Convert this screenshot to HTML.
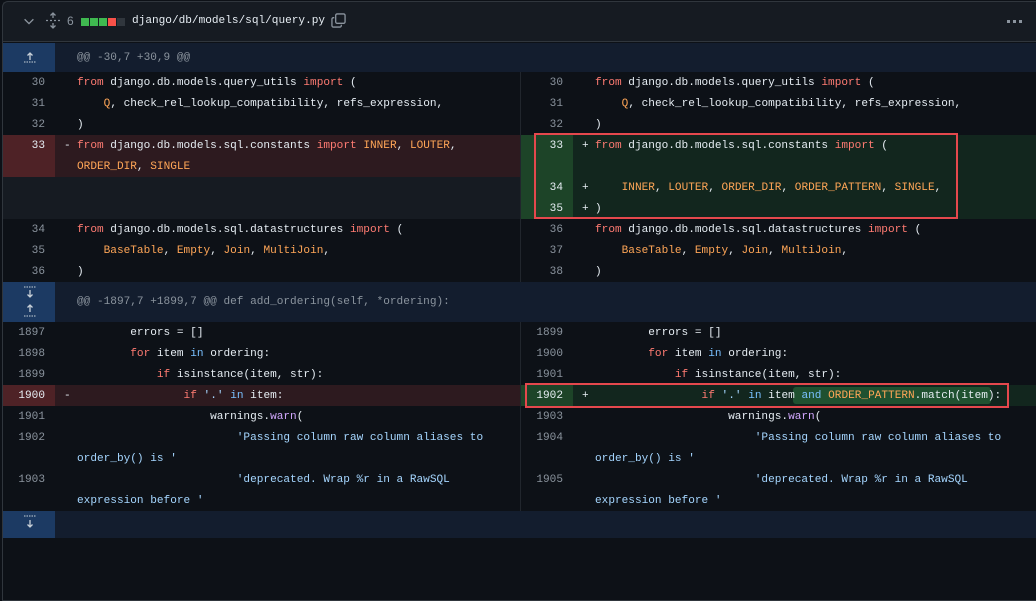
<!DOCTYPE html>
<html><head><meta charset="utf-8"><style>
*{margin:0;padding:0;box-sizing:border-box}
body{width:1036px;height:538px;background:#0d1117;overflow:hidden;position:relative;font-family:"Liberation Mono",monospace;font-size:11.1px;color:#e6edf3}
.frame{position:absolute;left:2px;top:1px;width:1040px;height:600px;border:1px solid #30363d;border-radius:6px 0 0 0}
.hdr{position:absolute;left:3px;top:2px;width:1033px;height:40px;background:#161b22;border-bottom:1px solid #30363d}
.r{position:absolute;height:21px;line-height:21px;white-space:pre;margin-top:1px}
.bg{position:absolute}
.n{position:absolute;text-align:right;color:#8b949e;line-height:21px;margin-top:1px}
.k{color:#ff7b72}.c{color:#ffa657}.s{color:#a5d6ff}.b{color:#79c0ff}.f{color:#d2a8ff}
.hk{color:#8b949e}
.box{position:absolute;border:2px solid #e5484d}
</style></head><body>
<div class="hdr"></div>
<div class="frame"></div>
<svg style="position:absolute;left:22px;top:14px" width="14" height="14" viewBox="0 0 16 16"><path d="M3 6l5 5 5-5" fill="none" stroke="#8b949e" stroke-width="1.5"/></svg>
<svg style="position:absolute;left:45px;top:12px" width="16" height="17" viewBox="0 0 16 17"><path d="M8 1v5M5.5 3.5L8 1l2.5 2.5M8 16v-5M5.5 13.5L8 16l2.5-2.5" fill="none" stroke="#8b949e" stroke-width="1.3"/><path d="M1 8.5h2M5 8.5h2M9 8.5h2M13 8.5h2" stroke="#8b949e" stroke-width="1.3"/></svg>
<div class="r" style="left:67px;top:10px;color:#8b949e;font-family:'Liberation Sans',sans-serif;font-size:12px">6</div>
<div style="position:absolute;left:81px;top:18px;width:8px;height:8px;background:#3fb950"></div>
<div style="position:absolute;left:90px;top:18px;width:8px;height:8px;background:#3fb950"></div>
<div style="position:absolute;left:99px;top:18px;width:8px;height:8px;background:#3fb950"></div>
<div style="position:absolute;left:108px;top:18px;width:8px;height:8px;background:#f85149"></div>
<div style="position:absolute;left:117px;top:18px;width:8px;height:8px;background:#30363d"></div>
<div class="r" style="left:132px;top:10px;font-size:11.1px">django/db/models/sql/query.py</div>
<svg style="position:absolute;left:331px;top:13px" width="15" height="15" viewBox="0 0 16 16"><rect x="5" y="1" width="10" height="10" rx="1.5" fill="none" stroke="#8b949e" stroke-width="1.4"/><path d="M3.5 5H2.5A1.5 1.5 0 001 6.5v7A1.5 1.5 0 002.5 15h7a1.5 1.5 0 001.5-1.5v-1" fill="none" stroke="#8b949e" stroke-width="1.4"/></svg>
<div style="position:absolute;left:1007px;top:20px;width:3px;height:3px;background:#8b949e;box-shadow:6px 0 #8b949e,12px 0 #8b949e"></div>

<div class="bg" style="left:3px;top:43px;width:1033px;height:29px;background:#131d2e"></div>
<div class="bg" style="left:3px;top:43px;width:52px;height:29px;background:#1c3a63"></div>
<svg style="position:absolute;left:22px;top:48px" width="16" height="16" viewBox="0 0 16 16"><path d="M8 12V5M5.5 7.5L8 5l2.5 2.5" fill="none" stroke="#c9d1d9" stroke-width="1.3"/><path d="M2 14h12" stroke="#c9d1d9" stroke-width="1" stroke-dasharray="1.5 1"/></svg>
<div class="r hk" style="left:77px;top:47px">@@ -30,7 +30,9 @@</div>

<div class="bg" style="left:520px;top:72px;width:1px;height:210px;background:#21262d"></div>
<div class="bg" style="left:520px;top:322px;width:1px;height:189px;background:#21262d"></div>

<div class="n" style="left:3px;top:72px;width:42px">30</div>
<div class="r" style="left:77px;top:72px"><span class="k">from</span> django.db.models.query_utils <span class="k">import</span> (</div>
<div class="n" style="left:3px;top:93px;width:42px">31</div>
<div class="r" style="left:77px;top:93px">    <span class="c">Q</span>, check_rel_lookup_compatibility, refs_expression,</div>
<div class="n" style="left:3px;top:114px;width:42px">32</div>
<div class="r" style="left:77px;top:114px">)</div>
<div class="bg" style="left:3px;top:135px;width:517px;height:42px;background:#2d1a1f"></div>
<div class="bg" style="left:3px;top:135px;width:52px;height:42px;background:#4e2226"></div>
<div class="n" style="left:3px;top:135px;width:42px;color:#e6edf3">33</div>
<div class="r" style="left:64px;top:135px">-</div>
<div class="r" style="left:77px;top:135px"><span class="k">from</span> django.db.models.sql.constants <span class="k">import</span> <span class="c">INNER</span>, <span class="c">LOUTER</span>,</div>
<div class="r" style="left:77px;top:156px"><span class="c">ORDER_DIR</span>, <span class="c">SINGLE</span></div>
<div class="bg" style="left:3px;top:177px;width:517px;height:42px;background:#161b22"></div>
<div class="n" style="left:3px;top:219px;width:42px">34</div>
<div class="r" style="left:77px;top:219px"><span class="k">from</span> django.db.models.sql.datastructures <span class="k">import</span> (</div>
<div class="n" style="left:3px;top:240px;width:42px">35</div>
<div class="r" style="left:77px;top:240px">    <span class="c">BaseTable</span>, <span class="c">Empty</span>, <span class="c">Join</span>, <span class="c">MultiJoin</span>,</div>
<div class="n" style="left:3px;top:261px;width:42px">36</div>
<div class="r" style="left:77px;top:261px">)</div>

<div class="n" style="left:521px;top:72px;width:42px">30</div>
<div class="r" style="left:595px;top:72px"><span class="k">from</span> django.db.models.query_utils <span class="k">import</span> (</div>
<div class="n" style="left:521px;top:93px;width:42px">31</div>
<div class="r" style="left:595px;top:93px">    <span class="c">Q</span>, check_rel_lookup_compatibility, refs_expression,</div>
<div class="n" style="left:521px;top:114px;width:42px">32</div>
<div class="r" style="left:595px;top:114px">)</div>
<div class="bg" style="left:521px;top:135px;width:515px;height:84px;background:#12261e"></div>
<div class="bg" style="left:521px;top:135px;width:52px;height:84px;background:#1d4428"></div>
<div class="n" style="left:521px;top:135px;width:42px;color:#e6edf3">33</div>
<div class="r" style="left:582px;top:135px">+</div>
<div class="r" style="left:595px;top:135px"><span class="k">from</span> django.db.models.sql.constants <span class="k">import</span> (</div>
<div class="n" style="left:521px;top:177px;width:42px;color:#e6edf3">34</div>
<div class="r" style="left:582px;top:177px">+</div>
<div class="r" style="left:595px;top:177px">    <span class="c">INNER</span>, <span class="c">LOUTER</span>, <span class="c">ORDER_DIR</span>, <span class="c">ORDER_PATTERN</span>, <span class="c">SINGLE</span>,</div>
<div class="n" style="left:521px;top:198px;width:42px;color:#e6edf3">35</div>
<div class="r" style="left:582px;top:198px">+</div>
<div class="r" style="left:595px;top:198px">)</div>
<div class="n" style="left:521px;top:219px;width:42px">36</div>
<div class="r" style="left:595px;top:219px"><span class="k">from</span> django.db.models.sql.datastructures <span class="k">import</span> (</div>
<div class="n" style="left:521px;top:240px;width:42px">37</div>
<div class="r" style="left:595px;top:240px">    <span class="c">BaseTable</span>, <span class="c">Empty</span>, <span class="c">Join</span>, <span class="c">MultiJoin</span>,</div>
<div class="n" style="left:521px;top:261px;width:42px">38</div>
<div class="r" style="left:595px;top:261px">)</div>
<div class="box" style="left:534px;top:133px;width:424px;height:86px"></div>

<div class="bg" style="left:3px;top:282px;width:1033px;height:40px;background:#131d2e"></div>
<div class="bg" style="left:3px;top:282px;width:52px;height:40px;background:#1c3a63"></div>
<svg style="position:absolute;left:22px;top:284px" width="16" height="36" viewBox="0 0 16 36"><path d="M2 3h12" stroke="#c9d1d9" stroke-width="1" stroke-dasharray="1.5 1"/><path d="M8 6v7M5.5 10.5L8 13l2.5-2.5" fill="none" stroke="#c9d1d9" stroke-width="1.3"/><path d="M8 28v-7M5.5 23.5L8 21l2.5 2.5" fill="none" stroke="#c9d1d9" stroke-width="1.3"/><path d="M2 32h12" stroke="#c9d1d9" stroke-width="1" stroke-dasharray="1.5 1"/></svg>
<div class="r hk" style="left:77px;top:291px">@@ -1897,7 +1899,7 @@ def add_ordering(self, *ordering):</div>

<div class="n" style="left:3px;top:322px;width:42px">1897</div>
<div class="r" style="left:77px;top:322px">        errors = []</div>
<div class="n" style="left:3px;top:343px;width:42px">1898</div>
<div class="r" style="left:77px;top:343px">        <span class="k">for</span> item <span class="b">in</span> ordering:</div>
<div class="n" style="left:3px;top:364px;width:42px">1899</div>
<div class="r" style="left:77px;top:364px">            <span class="k">if</span> isinstance(item, str):</div>
<div class="bg" style="left:3px;top:385px;width:517px;height:21px;background:#2d1a1f"></div>
<div class="bg" style="left:3px;top:385px;width:52px;height:21px;background:#4e2226"></div>
<div class="n" style="left:3px;top:385px;width:42px;color:#e6edf3">1900</div>
<div class="r" style="left:64px;top:385px">-</div>
<div class="r" style="left:77px;top:385px">                <span class="k">if</span> <span class="s">'.'</span> <span class="b">in</span> item:</div>
<div class="n" style="left:3px;top:406px;width:42px">1901</div>
<div class="r" style="left:77px;top:406px">                    warnings.<span class="f">warn</span>(</div>
<div class="n" style="left:3px;top:427px;width:42px">1902</div>
<div class="r" style="left:77px;top:427px"><span class="s">                        'Passing column raw column aliases to</span></div>
<div class="r" style="left:77px;top:448px"><span class="s">order_by() is '</span></div>
<div class="n" style="left:3px;top:469px;width:42px">1903</div>
<div class="r" style="left:77px;top:469px"><span class="s">                        'deprecated. Wrap %r in a RawSQL</span></div>
<div class="r" style="left:77px;top:490px"><span class="s">expression before '</span></div>

<div class="n" style="left:521px;top:322px;width:42px">1899</div>
<div class="r" style="left:595px;top:322px">        errors = []</div>
<div class="n" style="left:521px;top:343px;width:42px">1900</div>
<div class="r" style="left:595px;top:343px">        <span class="k">for</span> item <span class="b">in</span> ordering:</div>
<div class="n" style="left:521px;top:364px;width:42px">1901</div>
<div class="r" style="left:595px;top:364px">            <span class="k">if</span> isinstance(item, str):</div>
<div class="bg" style="left:521px;top:385px;width:515px;height:21px;background:#12261e"></div>
<div class="bg" style="left:521px;top:385px;width:52px;height:21px;background:#1d4428"></div>
<div class="bg" style="left:793px;top:387px;width:198px;height:17px;background:#1f5130;border-radius:3px"></div>
<div class="n" style="left:521px;top:385px;width:42px;color:#e6edf3">1902</div>
<div class="r" style="left:582px;top:385px">+</div>
<div class="r" style="left:595px;top:385px">                <span class="k">if</span> <span class="s">'.'</span> <span class="b">in</span> item <span class="b">and</span> <span class="c">ORDER_PATTERN</span>.match(item):</div>
<div class="n" style="left:521px;top:406px;width:42px">1903</div>
<div class="r" style="left:595px;top:406px">                    warnings.<span class="f">warn</span>(</div>
<div class="n" style="left:521px;top:427px;width:42px">1904</div>
<div class="r" style="left:595px;top:427px"><span class="s">                        'Passing column raw column aliases to</span></div>
<div class="r" style="left:595px;top:448px"><span class="s">order_by() is '</span></div>
<div class="n" style="left:521px;top:469px;width:42px">1905</div>
<div class="r" style="left:595px;top:469px"><span class="s">                        'deprecated. Wrap %r in a RawSQL</span></div>
<div class="r" style="left:595px;top:490px"><span class="s">expression before '</span></div>
<div class="box" style="left:525px;top:383px;width:484px;height:25px"></div>

<div class="bg" style="left:3px;top:511px;width:1033px;height:27px;background:#131d2e"></div>
<div class="bg" style="left:3px;top:511px;width:52px;height:27px;background:#1c3a63"></div>
<svg style="position:absolute;left:22px;top:514px" width="16" height="18" viewBox="0 0 16 18"><path d="M2 2h12" stroke="#c9d1d9" stroke-width="1" stroke-dasharray="1.5 1"/><path d="M8 6v7M5.5 10.5L8 13l2.5-2.5" fill="none" stroke="#c9d1d9" stroke-width="1.3"/></svg>
</body></html>
